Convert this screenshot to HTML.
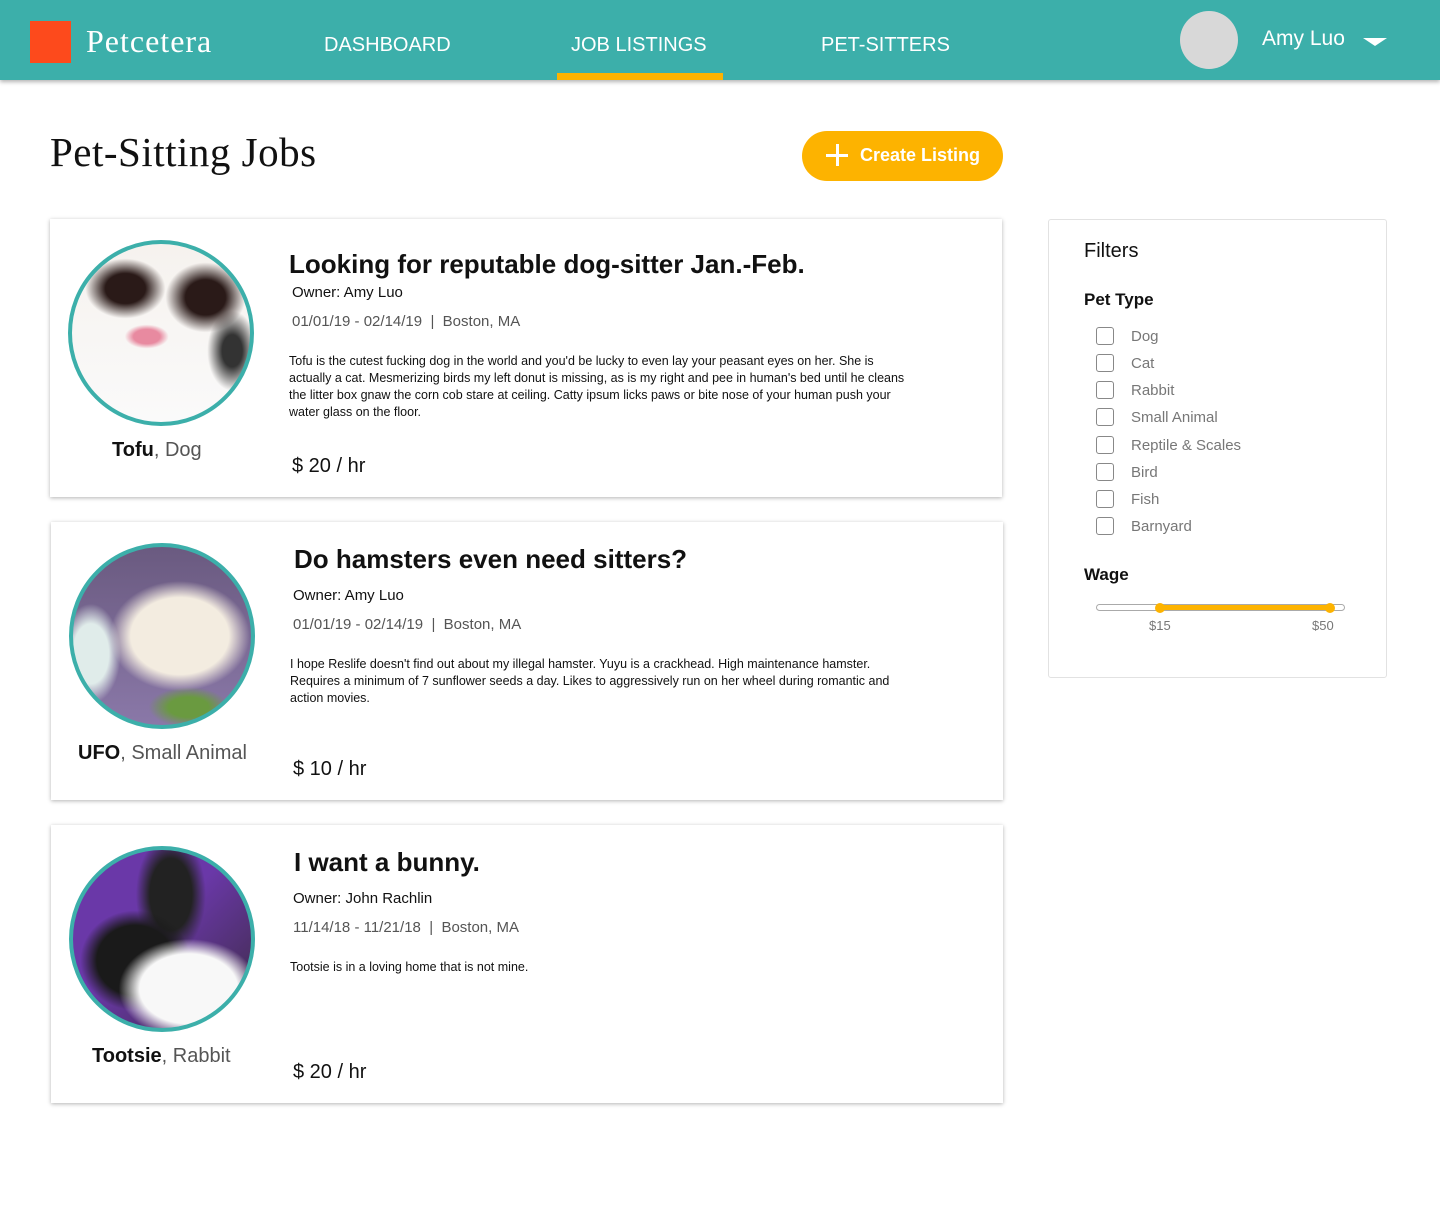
<!DOCTYPE html>
<html><head><meta charset="utf-8"><style>
*{box-sizing:border-box;margin:0;padding:0}
body{width:1440px;height:1210px;background:#fff;font-family:"Liberation Sans",sans-serif;color:#111;position:relative;overflow:hidden}
.a{position:absolute;white-space:nowrap}
.nav{position:absolute;left:0;top:0;width:1440px;height:80px;background:#3cafaa;box-shadow:0 2px 4px rgba(0,0,0,.3)}
.nl{color:#fff;font-size:20px;top:34px}
.card{position:absolute;width:952px;height:278px;background:#fff;box-shadow:0 1px 4px rgba(0,0,0,.3)}
.pic{position:absolute;width:186px;height:186px;border-radius:50%;border:4px solid #3cafaa;overflow:hidden}
.t{font-size:26px;font-weight:bold}
.o{font-size:15px}
.d{font-size:15px;color:#555}
.p{font-size:12.5px;line-height:17px;white-space:normal;width:630px}
.w{font-size:20px}
.n{font-size:20px}
.n span{color:#555}
.cb{position:absolute;left:1096px;width:18px;height:18px;border:1.5px solid #888;border-radius:3px}
.cl{left:1131px;font-size:15px;color:#777}
</style></head><body>
<div class="nav">
<div class="a" style="left:30px;top:21px;width:41px;height:42px;background:#fd4a1c"></div>
<div class="a" style="left:86px;top:23px;font-family:'Liberation Serif',serif;font-size:32px;letter-spacing:1px;color:#fff">Petcetera</div>
<div class="a nl" style="left:324px">DASHBOARD</div>
<div class="a nl" style="left:571px">JOB LISTINGS</div>
<div class="a" style="left:557px;top:73px;width:166px;height:7px;background:#fdb300"></div>
<div class="a nl" style="left:821px">PET-SITTERS</div>
<div class="a" style="left:1180px;top:11px;width:58px;height:58px;border-radius:50%;background:#d8d8d8"></div>
<div class="a" style="left:1262px;top:27px;font-size:21px;color:#fff">Amy Luo</div>
<div class="a" style="left:1363px;top:38px;width:0;height:0;border-left:12px solid transparent;border-right:12px solid transparent;border-top:8px solid #fff"></div>
</div>
<div class="a" style="left:50px;top:128px;font-family:'Liberation Serif',serif;font-size:41px;letter-spacing:0.5px">Pet-Sitting Jobs</div>
<div class="a" style="left:802px;top:131px;width:201px;height:50px;border-radius:25px;background:#fdb300;color:#fff;font-size:18px;font-weight:bold;padding:14px 0 0 58px">Create Listing</div>
<div class="a" style="left:826px;top:154px;width:22px;height:3px;background:#fff"></div>
<div class="a" style="left:836px;top:144px;width:3px;height:22px;background:#fff"></div>

<div class="card" style="left:50px;top:219px"></div>
<div class="pic a" style="left:68px;top:240px;background:
radial-gradient(ellipse 22px 12px at 42% 52%,#e88aa0 60%,transparent 100%),
radial-gradient(ellipse 40px 30px at 30% 25%,#2a1a18 50%,transparent 100%),
radial-gradient(ellipse 40px 35px at 75% 30%,#2a1a18 50%,transparent 100%),
radial-gradient(ellipse 25px 40px at 90% 60%,#333 40%,transparent 100%),
linear-gradient(#f6f2ee,#fafafa)"></div>
<div class="a n" style="left:112px;top:439px"><b>Tofu</b><span>, Dog</span></div>
<div class="a t" style="left:289px;top:249px">Looking for reputable dog-sitter Jan.-Feb.</div>
<div class="a o" style="left:292px;top:284px">Owner: Amy Luo</div>
<div class="a d" style="left:292px;top:313px">01/01/19 - 02/14/19 &nbsp;|&nbsp; Boston, MA</div>
<div class="a p" style="left:289px;top:353px">Tofu is the cutest fucking dog in the world and you'd be lucky to even lay your peasant eyes on her. She is actually a cat. Mesmerizing birds my left donut is missing, as is my right and pee in human's bed until he cleans the litter box gnaw the corn cob stare at ceiling. Catty ipsum licks paws or bite nose of your human push your water glass on the floor.</div>
<div class="a w" style="left:292px;top:455px">$ 20 / hr</div>

<div class="card" style="left:51px;top:522px"></div>
<div class="pic a" style="left:69px;top:543px;background:
radial-gradient(ellipse 70px 55px at 60% 50%,#f3ece0 70%,transparent 100%),
radial-gradient(ellipse 30px 50px at 10% 60%,#e0ecea 60%,transparent 100%),
radial-gradient(ellipse 40px 20px at 65% 90%,#6a9a40 50%,transparent 100%),
linear-gradient(#6a5a80,#8a78a8)"></div>
<div class="a n" style="left:78px;top:742px"><b>UFO</b><span>, Small Animal</span></div>
<div class="a t" style="left:294px;top:544px">Do hamsters even need sitters?</div>
<div class="a o" style="left:293px;top:587px">Owner: Amy Luo</div>
<div class="a d" style="left:293px;top:616px">01/01/19 - 02/14/19 &nbsp;|&nbsp; Boston, MA</div>
<div class="a p" style="left:290px;top:656px">I hope Reslife doesn't find out about my illegal hamster. Yuyu is a crackhead. High maintenance hamster. Requires a minimum of 7 sunflower seeds a day. Likes to aggressively run on her wheel during romantic and action movies.</div>
<div class="a w" style="left:293px;top:758px">$ 10 / hr</div>

<div class="card" style="left:51px;top:825px"></div>
<div class="pic a" style="left:69px;top:846px;background:
radial-gradient(ellipse 70px 50px at 65% 78%,#f8f8f8 70%,transparent 100%),
radial-gradient(ellipse 55px 50px at 35% 62%,#1a1a1a 70%,transparent 100%),
radial-gradient(ellipse 35px 60px at 55% 25%,#222 60%,transparent 100%),
linear-gradient(135deg,#6a38a8 45%,#3a2a40)"></div>
<div class="a n" style="left:92px;top:1045px"><b>Tootsie</b><span>, Rabbit</span></div>
<div class="a t" style="left:294px;top:847px">I want a bunny.</div>
<div class="a o" style="left:293px;top:890px">Owner: John Rachlin</div>
<div class="a d" style="left:293px;top:919px">11/14/18 - 11/21/18 &nbsp;|&nbsp; Boston, MA</div>
<div class="a p" style="left:290px;top:959px">Tootsie is in a loving home that is not mine.</div>
<div class="a w" style="left:293px;top:1061px">$ 20 / hr</div>

<div class="a" style="left:1048px;top:219px;width:339px;height:459px;border:1px solid #e2e2e2;border-radius:3px"></div>
<div class="a" style="left:1084px;top:240px;font-size:20px">Filters</div>
<div class="a" style="left:1084px;top:290px;font-size:17px;font-weight:bold">Pet Type</div>
<div class="cb" style="top:327px"></div><div class="a cl" style="top:328px">Dog</div>
<div class="cb" style="top:354px"></div><div class="a cl" style="top:355px">Cat</div>
<div class="cb" style="top:381px"></div><div class="a cl" style="top:382px">Rabbit</div>
<div class="cb" style="top:408px"></div><div class="a cl" style="top:409px">Small Animal</div>
<div class="cb" style="top:436px"></div><div class="a cl" style="top:437px">Reptile &amp; Scales</div>
<div class="cb" style="top:463px"></div><div class="a cl" style="top:464px">Bird</div>
<div class="cb" style="top:490px"></div><div class="a cl" style="top:491px">Fish</div>
<div class="cb" style="top:517px"></div><div class="a cl" style="top:518px">Barnyard</div>
<div class="a" style="left:1084px;top:565px;font-size:17px;font-weight:bold">Wage</div>
<div class="a" style="left:1096px;top:604px;width:249px;height:7px;border:1px solid #aaa;border-radius:4px"></div>
<div class="a" style="left:1160px;top:605px;width:170px;height:5px;background:#fdb300"></div>
<div class="a" style="left:1155px;top:603px;width:10px;height:10px;border-radius:50%;background:#fdb300"></div>
<div class="a" style="left:1325px;top:603px;width:10px;height:10px;border-radius:50%;background:#fdb300"></div>
<div class="a" style="left:1149px;top:618px;font-size:13px;color:#777">$15</div>
<div class="a" style="left:1312px;top:618px;font-size:13px;color:#777">$50</div>
</body></html>
